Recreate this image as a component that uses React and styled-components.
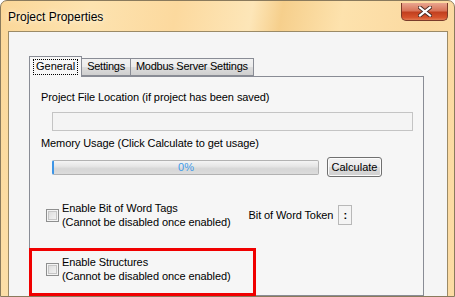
import React from "react";
import styled, { createGlobalStyle } from "styled-components";

const GlobalStyle = createGlobalStyle`
  html, body {
    margin: 0;
    padding: 0;
    background: #ffffff;
  }
  body {
    font-family: "Liberation Sans", Arial, sans-serif;
  }
`;

const Window = styled.div`
  width: 455px;
  height: 297px;
  overflow: hidden;
  box-sizing: border-box;
  border: 1px solid #8a7a5c;
  border-radius: 7px 7px 0 0;
  background: linear-gradient(
    100deg,
    #fbd798 0%,
    #fde3b0 18%,
    #fcd99e 35%,
    #fde6b8 50%,
    #f6cf8c 56%,
    #fde2ad 68%,
    #fbd9a0 85%,
    #fcdca4 100%
  );
  display: flex;
  flex-direction: column;
`;

const TitleBar = styled.div`
  height: 30px;
  display: flex;
  align-items: flex-start;
  justify-content: space-between;
  padding-left: 7px;
  padding-right: 6px;
`;

const Title = styled.span`
  font-size: 12px;
  line-height: 12px;
  margin-top: 10px;
  color: #000;
  text-shadow: 0 0 6px #fff6e0, 0 0 3px #fff6e0;
`;

const CloseButton = styled.div`
  width: 47px;
  height: 18px;
  margin-top: 2px;
  box-sizing: border-box;
  border: 1px solid #7a3b2a;
  border-top: none;
  border-radius: 0 0 5px 5px;
  background: linear-gradient(
    180deg,
    #e9a58f 0%,
    #d9755a 45%,
    #c2401f 55%,
    #d6532c 85%,
    #e07a52 100%
  );
  display: flex;
  align-items: center;
  justify-content: center;
`;

const Frame = styled.div`
  flex: 1;
  display: flex;
  padding: 0 6px 0 7px;
`;

const Client = styled.div`
  flex: 1;
  box-sizing: border-box;
  background: #f5f5f5;
  border: 1px solid #9b8a66;
  border-bottom: none;
  padding: 24px 23px 0 20px;
  display: flex;
  flex-direction: column;
`;

const TabStrip = styled.div`
  display: flex;
  align-items: flex-end;
  height: 20px;
  position: relative;
  z-index: 1;
`;

const Tab = styled.div`
  box-sizing: border-box;
  height: ${(p) => (p.$active ? "21px" : "18px")};
  margin-bottom: ${(p) => (p.$active ? "-1px" : "0")};
  padding: ${(p) => (p.$active ? "2px 3px 0" : "1px 5px 0")};
  border: 1px solid #898c95;
  border-bottom: ${(p) => (p.$active ? "none" : "1px solid #898c95")};
  border-left: ${(p) => (p.$first || p.$active ? "1px solid #898c95" : "none")};
  background: ${(p) =>
    p.$active ? "#f7f7f7" : "linear-gradient(180deg, #f2f2f2 0%, #ebebeb 50%, #dddddd 51%, #cfcfcf 100%)"};
  font-size: 11px;
  letter-spacing: -0.25px;
  color: #000;
  white-space: nowrap;
`;

const FocusText = styled.span`
  display: inline-block;
  padding: 1px 3px 2px;
  line-height: 13px;
  letter-spacing: 0;
  outline: 1px dotted #000;
  outline-offset: -1px;
`;

const Panel = styled.div`
  flex: 1;
  box-sizing: border-box;
  border: 1px solid #898c95;
  background: #f6f6f6;
  padding: 14px 0 0 11px;
  display: flex;
  flex-direction: column;
  align-items: flex-start;
`;

const Label = styled.div`
  font-size: 11px;
  line-height: 13px;
  letter-spacing: -0.08px;
  color: #000;
  white-space: nowrap;
  margin-top: ${(p) => p.$top || 0}px;
`;

const TextBox = styled.div`
  width: 361px;
  height: 19px;
  box-sizing: border-box;
  margin: 8px 0 0 11px;
  border: 1px solid #c4c4c4;
  background: #f4f4f4;
`;

const ProgressRow = styled.div`
  display: flex;
  align-items: center;
  gap: 8px;
  margin: 7px 0 0 11px;
`;

const Progress = styled.div`
  width: 267px;
  height: 15px;
  box-sizing: border-box;
  border: 1px solid #b2b2b2;
  border-left: 2px solid #3d95e6;
  border-radius: 2px;
  background: linear-gradient(180deg, #f4f4f4 0%, #e6e6e6 40%, #d6d6d6 60%, #dcdcdc 100%);
  display: flex;
  align-items: center;
  justify-content: center;
  font-size: 11px;
  color: #3f9ae8;
`;

const Button = styled.div`
  width: 55px;
  height: 20px;
  box-sizing: border-box;
  border: 1px solid #707070;
  border-radius: 3px;
  background: linear-gradient(180deg, #f2f2f2 0%, #ebebeb 49%, #dddddd 50%, #cfcfcf 100%);
  box-shadow: inset 0 0 0 1px #fcfcfc;
  display: flex;
  align-items: center;
  justify-content: center;
  font-size: 11px;
  color: #000;
`;

const OptionRow = styled.div`
  display: flex;
  align-items: center;
  margin: ${(p) => p.$top || 0}px 0 0 5px;
`;

const CheckOption = styled.div`
  display: flex;
  align-items: center;
  gap: 3px;
`;

const CheckBox = styled.div`
  width: 13px;
  height: 13px;
  box-sizing: border-box;
  border: 1px solid #8e8f8f;
  background: linear-gradient(135deg, #d8d8d8 0%, #e8e8e8 50%, #f6f6f6 100%);
  box-shadow: inset 0 0 0 1px #f4f4f4, inset 0 0 0 2px #c6c6c6;
`;

const CheckText = styled.div`
  font-size: 11px;
  line-height: 14px;
  letter-spacing: -0.08px;
  color: #000;
  white-space: nowrap;
`;

const TokenLabel = styled.div`
  display: flex;
  align-items: center;
  gap: 5px;
  margin-left: 18px;
  font-size: 11px;
  letter-spacing: -0.1px;
  color: #000;
`;

const TokenBox = styled.div`
  width: 14px;
  height: 20px;
  box-sizing: border-box;
  border: 1px solid #b8b8b8;
  background: #f4f4f4;
  display: flex;
  align-items: center;
  justify-content: center;
  font-size: 11px;
  font-weight: bold;
`;

const HighlightWrap = styled.div`
  position: relative;
  align-self: stretch;
  margin-top: 26px;
`;

const Highlight = styled.div`
  position: absolute;
  left: -12px;
  top: -7px;
  width: 227px;
  height: 48px;
  box-sizing: border-box;
  border: 3px solid #f00000;
  pointer-events: none;
`;

const CloseGlyph = () => (
  <svg width="14" height="11" viewBox="0 0 14 11">
    <path
      d="M2 1.5 L12 9.5 M12 1.5 L2 9.5"
      stroke="#4a2a22"
      strokeWidth="4"
      strokeLinecap="square"
    />
    <path
      d="M2 1.5 L12 9.5 M12 1.5 L2 9.5"
      stroke="#ffffff"
      strokeWidth="2.2"
      strokeLinecap="square"
    />
  </svg>
);

export default function App() {
  return (
    <>
      <GlobalStyle />
      <Window>
        <TitleBar>
          <Title>Project Properties</Title>
          <CloseButton>
            <CloseGlyph />
          </CloseButton>
        </TitleBar>
        <Frame>
          <Client>
            <TabStrip>
              <Tab $active $first>
                <FocusText>General</FocusText>
              </Tab>
              <Tab>Settings</Tab>
              <Tab>Modbus Server Settings</Tab>
            </TabStrip>
            <Panel>
              <Label>Project File Location (if project has been saved)</Label>
              <TextBox />
              <Label $top={6}>Memory Usage (Click Calculate to get usage)</Label>
              <ProgressRow>
                <Progress>0%</Progress>
                <Button>Calculate</Button>
              </ProgressRow>
              <OptionRow $top={24}>
                <CheckOption>
                  <CheckBox />
                  <CheckText>
                    Enable Bit of Word Tags
                    <br />
                    (Cannot be disabled once enabled)
                  </CheckText>
                </CheckOption>
                <TokenLabel>
                  Bit of Word Token
                  <TokenBox>:</TokenBox>
                </TokenLabel>
              </OptionRow>
              <HighlightWrap>
                <OptionRow>
                  <CheckOption>
                    <CheckBox />
                    <CheckText>
                      Enable Structures
                      <br />
                      (Cannot be disabled once enabled)
                    </CheckText>
                  </CheckOption>
                </OptionRow>
                <Highlight />
              </HighlightWrap>
            </Panel>
          </Client>
        </Frame>
      </Window>
    </>
  );
}
